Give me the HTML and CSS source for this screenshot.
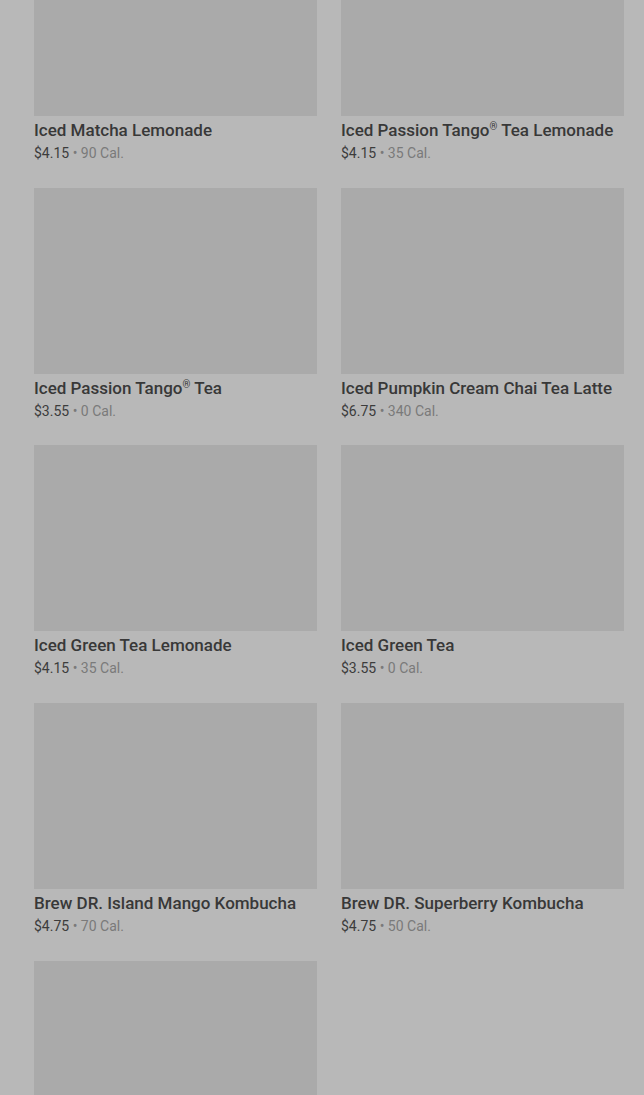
FILE: index.html
```html
<!DOCTYPE html>
<html lang="en">
<head>
    <meta charset="UTF-8">
    <meta name="viewport" content="width=device-width, initial-scale=1.0">
    <title>Iced Tea Menu</title>
    <link rel="stylesheet" href="styles.css">
</head>
<body>

<div class="menu">
    <div class="product-grid">
        <div class="product">
            <div class="product-image"></div>
            <div class="product-name">Iced Matcha Lemonade</div>
            <div class="product-meta"><span class="price">$4.15</span> • 90 Cal.</div>
        </div>
        <div class="product">
            <div class="product-image"></div>
            <div class="product-name">Iced Passion Tango<sup>®</sup> Tea Lemonade</div>
            <div class="product-meta"><span class="price">$4.15</span> • 35 Cal.</div>
        </div>
        <div class="product">
            <div class="product-image"></div>
            <div class="product-name">Iced Passion Tango<sup>®</sup> Tea</div>
            <div class="product-meta"><span class="price">$3.55</span> • 0 Cal.</div>
        </div>
        <div class="product">
            <div class="product-image"></div>
            <div class="product-name">Iced Pumpkin Cream Chai Tea Latte</div>
            <div class="product-meta"><span class="price">$6.75</span> • 340 Cal.</div>
        </div>
        <div class="product">
            <div class="product-image"></div>
            <div class="product-name">Iced Green Tea Lemonade</div>
            <div class="product-meta"><span class="price">$4.15</span> • 35 Cal.</div>
        </div>
        <div class="product">
            <div class="product-image"></div>
            <div class="product-name">Iced Green Tea</div>
            <div class="product-meta"><span class="price">$3.55</span> • 0 Cal.</div>
        </div>
        <div class="product">
            <div class="product-image"></div>
            <div class="product-name">Brew DR. Island Mango Kombucha</div>
            <div class="product-meta"><span class="price">$4.75</span> • 70 Cal.</div>
        </div>
        <div class="product">
            <div class="product-image"></div>
            <div class="product-name">Brew DR. Superberry Kombucha</div>
            <div class="product-meta"><span class="price">$4.75</span> • 50 Cal.</div>
        </div>
        <div class="product">
            <div class="product-image"></div>
        </div>
    </div>
</div>

</body>
</html>
```

FILE: styles.css
```css
html, body {
    margin: 0;
    padding: 0;
    background-color: #b8b8b8;
    font-family: Roboto, "Liberation Sans", Arial, sans-serif;
}
.menu {
    padding: 0 20px 0 34px;
    margin-top: -70px; /* page is scrolled part way down */
}
.product-grid {
    display: grid;
    grid-template-columns: 283px 283px;
    column-gap: 24px;
    row-gap: 24.7px;
}
.product-image {
    height: 186px;
    background-color: #aaaaaa;
}
.product-name {
    margin-top: 3px;
    font-size: 17px;
    font-weight: 500;
    line-height: 22px;
    color: #383838;
    white-space: nowrap;
}
.product-name sup {
    font-size: 10px;
    vertical-align: 6px;
    line-height: 0;
}
.product-meta {
    margin-top: 2px;
    font-size: 14px;
    line-height: 20px;
    color: #7a7a7a;
}
.product-meta .price {
    color: #3c3c3c;
}
```
